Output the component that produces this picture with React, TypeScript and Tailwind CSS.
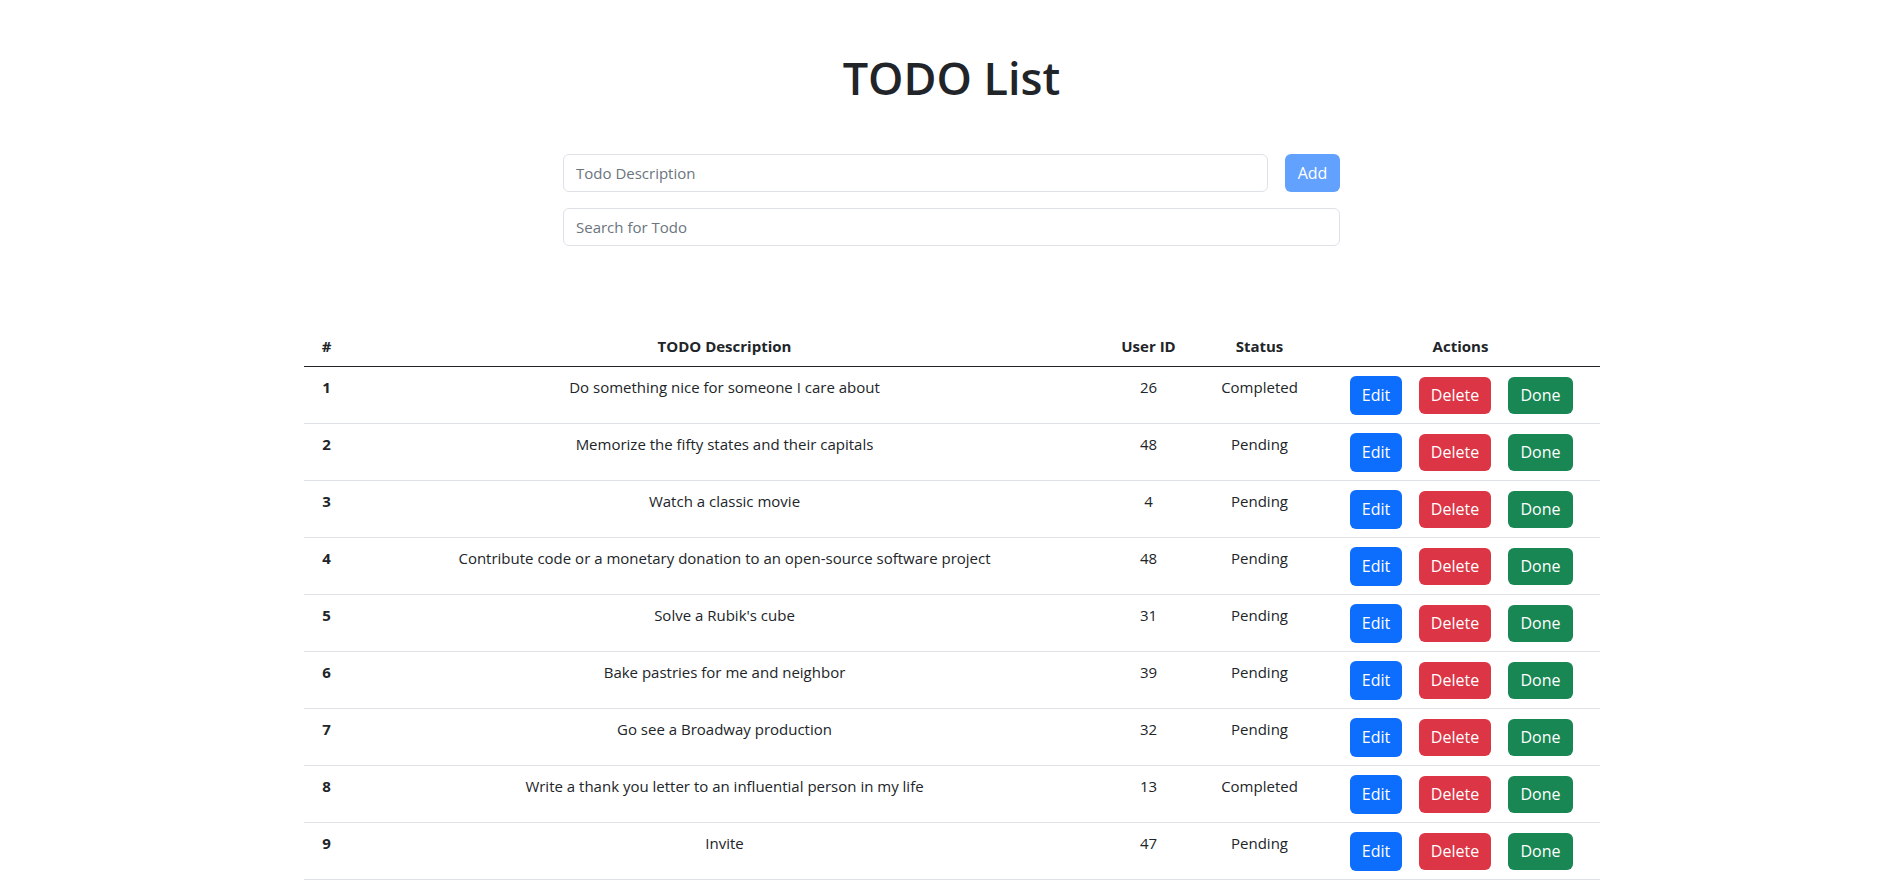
import { useState } from "react";

type Todo = {
  id: number;
  todo: string;
  userId: number;
  completed: boolean;
};

const todos: Todo[] = [
  { id: 1, todo: "Do something nice for someone I care about", userId: 26, completed: true },
  { id: 2, todo: "Memorize the fifty states and their capitals", userId: 48, completed: false },
  { id: 3, todo: "Watch a classic movie", userId: 4, completed: false },
  { id: 4, todo: "Contribute code or a monetary donation to an open-source software project", userId: 48, completed: false },
  { id: 5, todo: "Solve a Rubik's cube", userId: 31, completed: false },
  { id: 6, todo: "Bake pastries for me and neighbor", userId: 39, completed: false },
  { id: 7, todo: "Go see a Broadway production", userId: 32, completed: false },
  { id: 8, todo: "Write a thank you letter to an influential person in my life", userId: 13, completed: true },
  { id: 9, todo: "Invite", userId: 47, completed: false },
];

export default function App() {
  const [description, setDescription] = useState("");
  const [search, setSearch] = useState("");

  const visible = todos.filter((t) =>
    t.todo.toLowerCase().includes(search.toLowerCase())
  );

  return (
    <div className="min-h-[880px] bg-white pl-[5px] font-['Open_Sans',sans-serif] text-[15px] leading-6 text-[#212529]">
      <h1 className="pt-[50px] text-center text-[45px] font-semibold leading-[55px]">
        TODO List
      </h1>

      <div className="mx-auto mt-[49px] w-[777px]">
        <div className="flex gap-[17px]">
          <input
            className="h-[38px] flex-1 rounded-md border border-[#dee2e6] px-3 text-[15px] outline-none placeholder:text-[#6c757d]"
            placeholder="Todo Description"
            value={description}
            onChange={(e) => setDescription(e.target.value)}
          />
          <button
            className="h-[38px] w-[55px] rounded-md bg-[#62a1fe] text-base text-white"
            disabled={!description}
          >
            Add
          </button>
        </div>
        <input
          className="mt-4 h-[38px] w-full rounded-md border border-[#dee2e6] px-3 text-[15px] outline-none placeholder:text-[#6c757d]"
          placeholder="Search for Todo"
          value={search}
          onChange={(e) => setSearch(e.target.value)}
        />
      </div>

      <table className="mx-auto mt-20 w-[1296px] table-fixed border-collapse">
        <colgroup>
          <col className="w-[46px]" />
          <col className="w-[750px]" />
          <col className="w-[98px]" />
          <col className="w-[124px]" />
          <col className="w-[278px]" />
        </colgroup>
        <thead>
          <tr className="border-b border-[#212529]">
            <th className="py-2 text-center font-bold">#</th>
            <th className="py-2 text-center font-bold">TODO Description</th>
            <th className="py-2 text-center font-bold">User ID</th>
            <th className="py-2 text-center font-bold">Status</th>
            <th className="py-2 text-center font-bold">Actions</th>
          </tr>
        </thead>
        <tbody>
          {visible.map((t) => (
            <tr key={t.id} className="border-b border-[#dee2e6]">
              <td className="py-2 text-center align-top font-bold">{t.id}</td>
              <td className="py-2 text-center align-top">{t.todo}</td>
              <td className="py-2 text-center align-top">{t.userId}</td>
              <td className="py-2 text-center align-top">
                {t.completed ? "Completed" : "Pending"}
              </td>
              <td className="py-2">
                <div className="flex h-10 items-center justify-center gap-[17px] pl-[2px] text-base">
                  <button className="h-[39px] w-[52px] rounded-md bg-[#0d6efd] text-white">
                    Edit
                  </button>
                  <button className="h-[37px] w-[72px] rounded-md bg-[#dc3545] text-white">
                    Delete
                  </button>
                  <button className="h-[37px] w-[65px] rounded-md bg-[#198754] text-white">
                    Done
                  </button>
                </div>
              </td>
            </tr>
          ))}
        </tbody>
      </table>
    </div>
  );
}
